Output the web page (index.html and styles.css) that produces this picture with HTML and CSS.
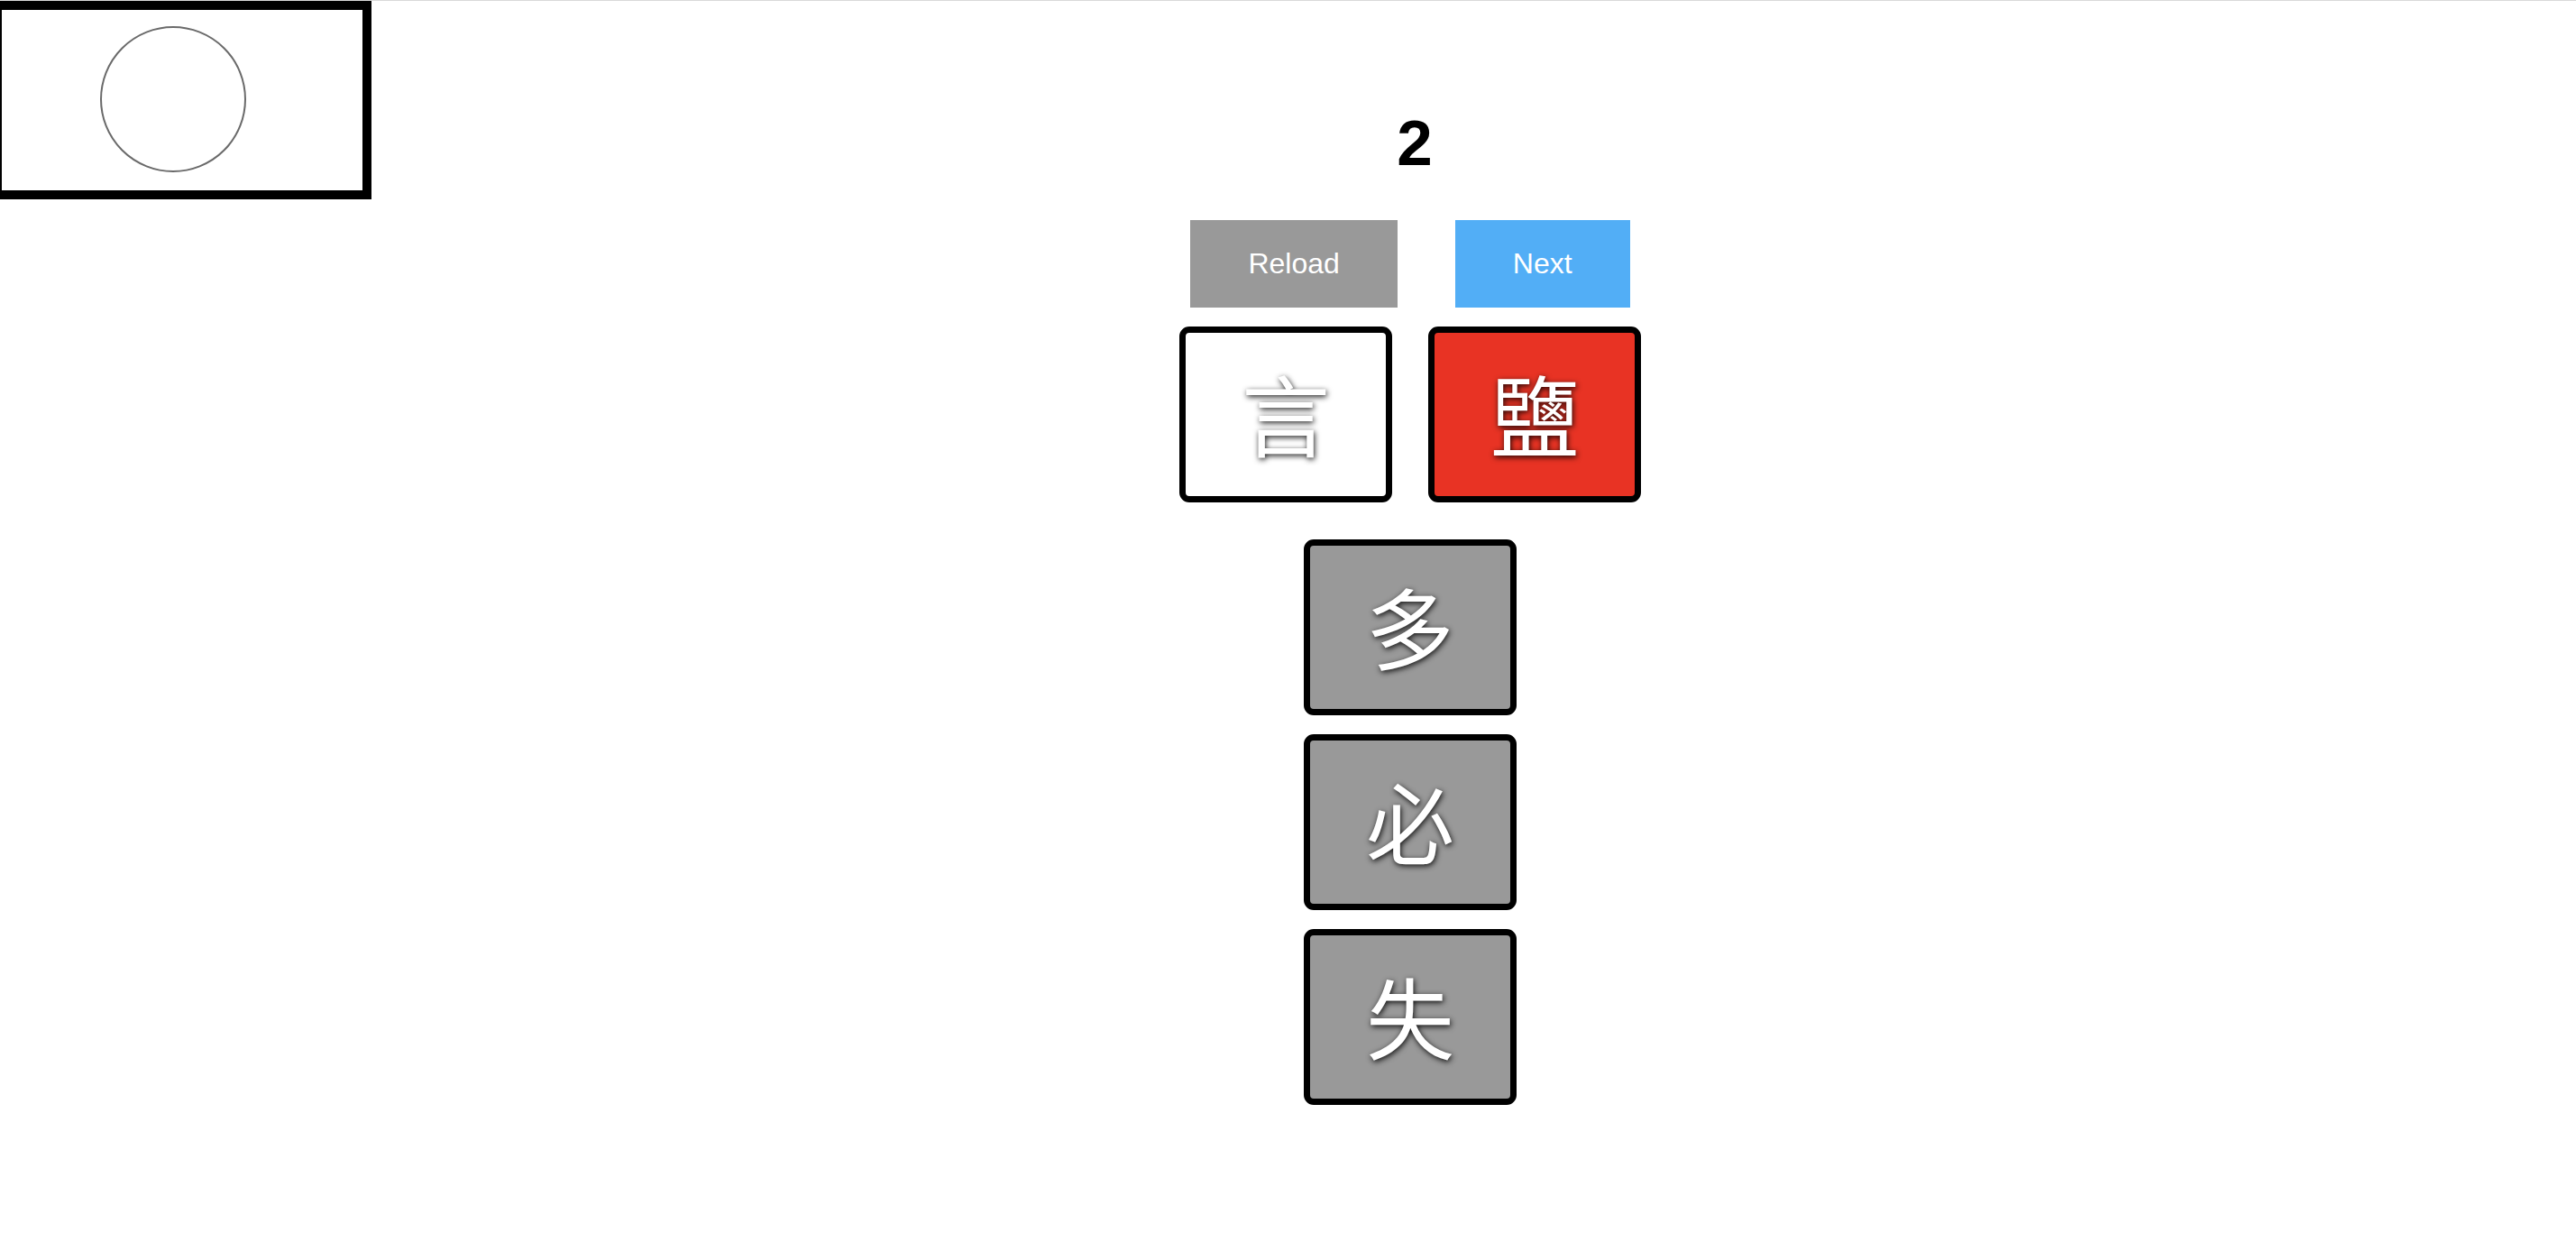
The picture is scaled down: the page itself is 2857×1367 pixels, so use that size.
FILE: index.html
```html
<!DOCTYPE html>
<html lang="zh-Hant">
<head>
<meta charset="utf-8">
<title>Quiz</title>
<link rel="stylesheet" href="styles.css">
</head>
<body>
<div class="topline"></div>
<div class="canvas-box">
  <svg class="canvas" width="400" height="200" viewBox="0 0 400 200">
    <circle cx="190" cy="99" r="80" fill="none" stroke="#6a6a6a" stroke-width="2"/>
  </svg>
</div>
<main class="main">
  <div class="count">2</div>
  <div class="buttons">
    <button class="btn btn-reload">Reload</button>
    <button class="btn btn-next">Next</button>
  </div>
  <div class="pair">
    <div class="tile tile-white">言</div>
    <div class="tile tile-red">鹽</div>
  </div>
  <div class="options">
    <div class="tile tile-grey">多</div>
    <div class="tile tile-grey">必</div>
    <div class="tile tile-grey">失</div>
  </div>
</main>
</body>
</html>
```
FILE: styles.css
```css
html, body {
  margin: 0;
  padding: 0;
  background: #fff;
}
body {
  font-family: "Liberation Sans", Arial, sans-serif;
  min-height: 1367px;
}
.topline {
  height: 1px;
  background: #d9d9d9;
}
.canvas-box {
  position: absolute;
  left: -8px;
  top: 1px;
  border: 10px solid #000;
  width: 400px;
  height: 200px;
  background: #fff;
}
.canvas {
  display: block;
}
.main {
  display: flex;
  flex-direction: column;
  align-items: center;
  padding-left: 271px;
  padding-top: 122px;
}
.count {
  font-size: 71px;
  line-height: 72px;
  font-weight: bold;
  color: #000;
  height: 72px;
  padding-left: 10px;
}
.buttons {
  display: flex;
  gap: 64px;
  margin-top: 49px;
}
.btn {
  font-family: "Liberation Sans", Arial, sans-serif;
  font-size: 32px;
  color: #fff;
  border: none;
  height: 97px;
  padding: 0 64px;
  margin: 0;
  cursor: pointer;
}
.btn-reload {
  background: #999999;
}
.btn-next {
  background: #52aef6;
}
.pair {
  display: flex;
  gap: 40px;
  margin-top: 21px;
}
.options {
  display: flex;
  flex-direction: column;
  gap: 21px;
  margin-top: 41px;
}
.tile {
  box-sizing: border-box;
  width: 236px;
  height: 195px;
  border: 7px solid #000;
  border-radius: 11px;
  padding-bottom: 8px;
  display: flex;
  align-items: center;
  justify-content: center;
  color: #fff;
  font-family: "Noto Sans CJK TC", "Noto Sans CJK SC", sans-serif;
  font-size: 98px;
  line-height: 1;
  text-shadow: 1px 2px 6px rgba(0, 0, 0, 0.9);
}
.tile-white {
  background: #fff;
}
.tile-red {
  background: #e83324;
}
.tile-grey {
  background: #999999;
}
```
